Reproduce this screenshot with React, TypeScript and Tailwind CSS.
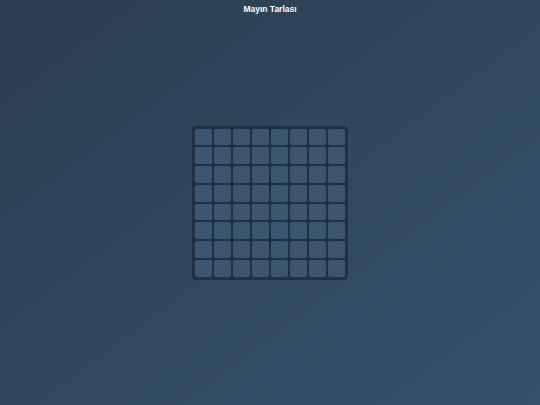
export default function App() {
  const cells = Array.from({ length: 64 }, (_, i) => i)

  return (
    <div className="flex h-[405px] w-[540px] flex-col bg-gradient-to-br from-[#2c3e50] to-[#35506b] font-['Liberation_Sans',Arial,sans-serif]">
      <h1 className="h-[18px] text-center text-[8.5px] font-bold leading-[18px] text-white">Mayın Tarlası</h1>
      <div className="flex flex-1 items-center justify-center">
        <div className="grid h-[154px] w-[156px] grid-cols-8 grid-rows-8 gap-[2px] rounded-[4px] bg-[#22303f] p-[3px]">
          {cells.map((c) => (
            <div key={c} className="rounded-[2px] bg-[#3d5670]" />
          ))}
        </div>
      </div>
      <div className="h-[18px]" />
    </div>
  )
}
